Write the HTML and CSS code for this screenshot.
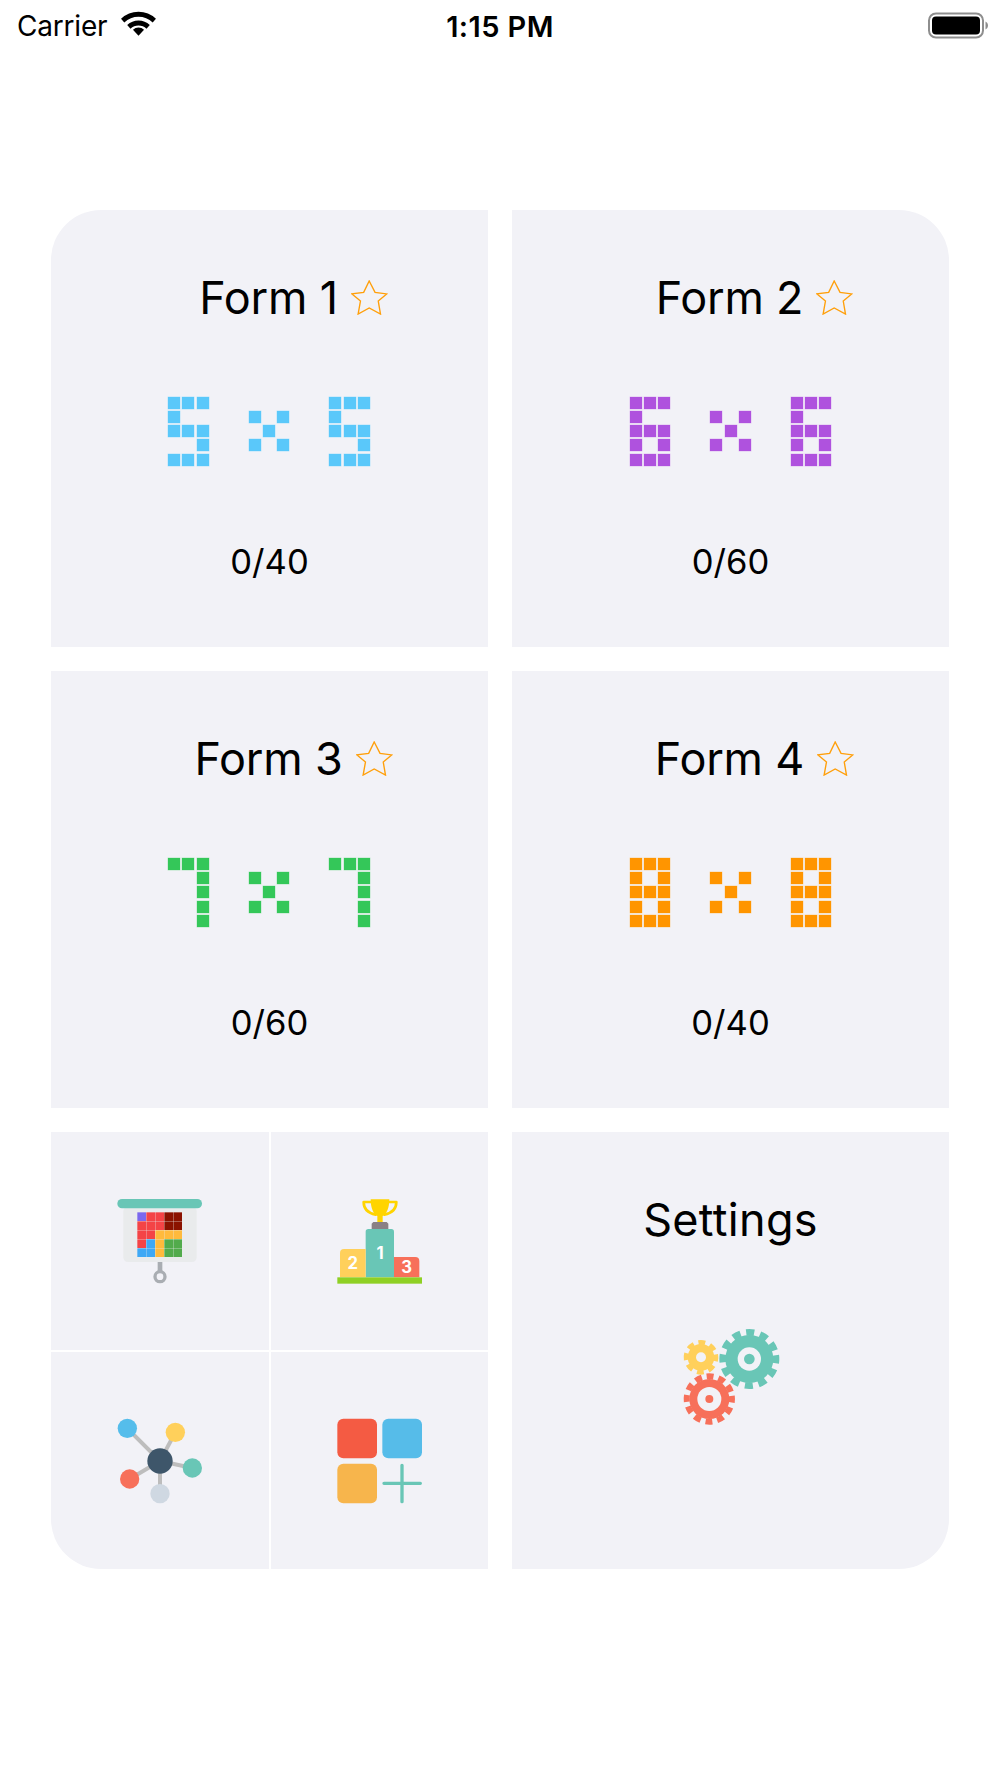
FILE: index.html
```html
<!DOCTYPE html>
<html lang="en">
<head>
<meta charset="utf-8">
<title>Forms</title>
<link rel="stylesheet" href="styles.css">
</head>
<body>
<header class="status">
  <div class="status-left">
    <span class="carrier">Carrier</span>
    <svg class="wifi" viewBox="0 2 36 24"><path d="M18 25.500 12.600 19.600a8 8 0 0 1 10.800 0Z"/><path d="M18 2.200A25 25 0 0 1 35 9l-3.200 3.500a20.200 20.200 0 0 0-27.600 0L1 9A25 25 0 0 1 18 2.200Z"/><path d="M18 10.600a16 16 0 0 1 11 4.400l-3.200 3.500a11.400 11.400 0 0 0-15.600 0L7 15a16 16 0 0 1 11-4.400Z"/></svg>
  </div>
  <div class="time">1:15 PM</div>
  <div class="status-right">
    <svg class="battery" viewBox="0 0 60 27"><rect x="1" y="1.500" width="54" height="24" rx="7" class="batt-line"/><rect x="4" y="4.500" width="48" height="18" rx="4"/><path d="M57.500 9.500v8c1.500-.6 2.500-2.300 2.500-4s-1-3.400-2.500-4Z" class="batt-nub"/></svg>
  </div>
</header>

<main class="board">
  <section class="card sky">
    <h2 class="title"><span class="title-text">Form 1<svg class="star" viewBox="0 0 38 36"><polygon points="18.700,1 24.700,12.700 36.700,14.300 28,21.700 30.300,35 18.700,28.700 7.300,35 9.700,21.700 1,14.300 13,12.700"/></svg></span></h2>
    <div class="pixels">
      <div class="digit"><i></i><i></i><i></i><i></i><b></b><b></b><i></i><i></i><i></i><b></b><b></b><i></i><i></i><i></i><i></i></div>
      <div class="digit"><b></b><b></b><b></b><i></i><b></b><i></i><b></b><i></i><b></b><i></i><b></b><i></i><b></b><b></b><b></b></div>
      <div class="digit"><i></i><i></i><i></i><i></i><b></b><b></b><i></i><i></i><i></i><b></b><b></b><i></i><i></i><i></i><i></i></div>
    </div>
    <p class="count">0/40</p>
  </section>

  <section class="card violet">
    <h2 class="title"><span class="title-text">Form 2<svg class="star" viewBox="0 0 38 36"><polygon points="18.700,1 24.700,12.700 36.700,14.300 28,21.700 30.300,35 18.700,28.700 7.300,35 9.700,21.700 1,14.300 13,12.700"/></svg></span></h2>
    <div class="pixels">
      <div class="digit"><i></i><i></i><i></i><i></i><b></b><b></b><i></i><i></i><i></i><i></i><b></b><i></i><i></i><i></i><i></i></div>
      <div class="digit"><b></b><b></b><b></b><i></i><b></b><i></i><b></b><i></i><b></b><i></i><b></b><i></i><b></b><b></b><b></b></div>
      <div class="digit"><i></i><i></i><i></i><i></i><b></b><b></b><i></i><i></i><i></i><i></i><b></b><i></i><i></i><i></i><i></i></div>
    </div>
    <p class="count">0/60</p>
  </section>

  <section class="card green">
    <h2 class="title"><span class="title-text">Form 3<svg class="star" viewBox="0 0 38 36"><polygon points="18.700,1 24.700,12.700 36.700,14.300 28,21.700 30.300,35 18.700,28.700 7.300,35 9.700,21.700 1,14.300 13,12.700"/></svg></span></h2>
    <div class="pixels">
      <div class="digit"><i></i><i></i><i></i><b></b><b></b><i></i><b></b><b></b><i></i><b></b><b></b><i></i><b></b><b></b><i></i></div>
      <div class="digit"><b></b><b></b><b></b><i></i><b></b><i></i><b></b><i></i><b></b><i></i><b></b><i></i><b></b><b></b><b></b></div>
      <div class="digit"><i></i><i></i><i></i><b></b><b></b><i></i><b></b><b></b><i></i><b></b><b></b><i></i><b></b><b></b><i></i></div>
    </div>
    <p class="count">0/60</p>
  </section>

  <section class="card orange">
    <h2 class="title"><span class="title-text">Form 4<svg class="star" viewBox="0 0 38 36"><polygon points="18.700,1 24.700,12.700 36.700,14.300 28,21.700 30.300,35 18.700,28.700 7.300,35 9.700,21.700 1,14.300 13,12.700"/></svg></span></h2>
    <div class="pixels">
      <div class="digit"><i></i><i></i><i></i><i></i><b></b><i></i><i></i><i></i><i></i><i></i><b></b><i></i><i></i><i></i><i></i></div>
      <div class="digit"><b></b><b></b><b></b><i></i><b></b><i></i><b></b><i></i><b></b><i></i><b></b><i></i><b></b><b></b><b></b></div>
      <div class="digit"><i></i><i></i><i></i><i></i><b></b><i></i><i></i><i></i><i></i><i></i><b></b><i></i><i></i><i></i><i></i></div>
    </div>
    <p class="count">0/40</p>
  </section>

  <section class="tools">
    <div class="tool">
      <svg class="icon" viewBox="0 0 360 360">
        <rect x="70" y="80" width="220" height="166" rx="14" fill="#e9ebec"/>
        <rect x="52" y="57" width="254" height="28" rx="14" fill="#69c6b6"/>
        <rect x="173" y="246" width="14" height="32" fill="#a9adb2"/>
        <circle cx="180" cy="290" r="15" fill="none" stroke="#a9adb2" stroke-width="10"/>
        <g fill="#f44446">
          <rect x="139" y="97" width="26" height="26"/><rect x="166" y="97" width="26" height="26"/>
          <rect x="112" y="124" width="26" height="26"/><rect x="139" y="124" width="26" height="26"/><rect x="166" y="124" width="26" height="26"/>
          <rect x="112" y="151" width="26" height="26"/><rect x="139" y="151" width="26" height="26"/>
          <rect x="112" y="178" width="26" height="26"/>
        </g>
        <rect x="112" y="97" width="26" height="26" fill="#7b68ee"/>
        <g fill="#8b1200">
          <rect x="193" y="97" width="26" height="26"/><rect x="220" y="97" width="26" height="26"/>
          <rect x="193" y="124" width="26" height="26"/><rect x="220" y="124" width="26" height="26"/>
        </g>
        <g fill="#ffba3c">
          <rect x="166" y="151" width="26" height="26"/><rect x="193" y="151" width="26" height="26"/><rect x="220" y="151" width="26" height="26"/>
          <rect x="166" y="178" width="26" height="26"/><rect x="166" y="205" width="26" height="26"/>
        </g>
        <g fill="#3ea8f5">
          <rect x="139" y="178" width="26" height="26"/><rect x="112" y="205" width="26" height="26"/><rect x="139" y="205" width="26" height="26"/>
        </g>
        <g fill="#52ab4c">
          <rect x="193" y="178" width="26" height="26"/><rect x="220" y="178" width="26" height="26"/>
          <rect x="193" y="205" width="26" height="26"/><rect x="220" y="205" width="26" height="26"/>
        </g>
      </svg>
    </div>
    <div class="tool">
      <svg class="icon" viewBox="0 0 360 360">
        <path d="M155 66h-24c0 22 16 34 36 38M205 66h24c0 22-16 34-36 38" fill="none" stroke="#ffd400" stroke-width="8" stroke-linejoin="round" stroke-linecap="round"/>
        <path d="M152 58h56c0 26-8 44-20 50v18h-16v-18c-12-6-20-24-20-50Z" fill="#ffd400"/>
        <path d="M160 126h40l5 5v18h-50v-18Z" fill="#8a7f85"/>
        <path d="M137 292V155a8 8 0 0 1 8-8h69a8 8 0 0 1 8 8v137Z" fill="#69c6b6"/>
        <path d="M60 292v-73a12 12 0 0 1 12-12h65v85Z" fill="#ffd05b"/>
        <path d="M222 292v-61h64a12 12 0 0 1 12 12v49Z" fill="#f7705a"/>
        <rect x="52" y="292" width="254" height="19" fill="#8fd024"/>
        <text x="180" y="236" class="rank">1</text>
        <text x="98" y="267" class="rank">2</text>
        <text x="260" y="278" class="rank">3</text>
      </svg>
    </div>
    <div class="tool">
      <svg class="icon" viewBox="0 0 360 360">
        <g stroke="#bdbdbd" stroke-width="12">
          <line x1="180" y1="183" x2="82" y2="85"/>
          <line x1="180" y1="183" x2="226" y2="97"/>
          <line x1="180" y1="183" x2="277" y2="204"/>
          <line x1="180" y1="183" x2="89" y2="237"/>
          <line x1="180" y1="183" x2="180" y2="281"/>
        </g>
        <circle cx="82" cy="85" r="29" fill="#55bdeb"/>
        <circle cx="226" cy="97" r="29" fill="#ffd05b"/>
        <circle cx="277" cy="204" r="29" fill="#69c6b6"/>
        <circle cx="89" cy="237" r="29" fill="#f7705a"/>
        <circle cx="180" cy="281" r="29" fill="#cfd8e2"/>
        <circle cx="180" cy="183" r="38" fill="#3e566a"/>
      </svg>
    </div>
    <div class="tool">
      <svg class="icon" viewBox="0 0 360 360">
        <rect x="52" y="56" width="119" height="119" rx="18" fill="#f45b43"/>
        <rect x="187" y="56" width="119" height="119" rx="18" fill="#56bce9"/>
        <rect x="52" y="191" width="119" height="119" rx="18" fill="#f7b54c"/>
        <path d="M246 196v109M192 250h109" fill="none" stroke="#69c6b6" stroke-width="10" stroke-linecap="round"/>
      </svg>
    </div>
  </section>

  <section class="card settings">
    <h2 class="title title-wide"><span class="title-text">Settings</span></h2>
    <svg class="gears" viewBox="0 0 360 360">
      <circle cx="235" cy="147" r="72" fill="#69c6b6"/>
      <circle cx="235" cy="147" r="80" fill="none" stroke="#69c6b6" stroke-width="20" pathLength="24" stroke-dasharray="1.150 .85" transform="rotate(-8 235 147)"/>
      <circle cx="235" cy="147" r="35" fill="#f2f2f7"/>
      <circle cx="235" cy="147" r="16" fill="#69c6b6"/>
      <circle cx="90" cy="142" r="40" fill="#ffd05b"/>
      <circle cx="90" cy="142" r="44" fill="none" stroke="#ffd05b" stroke-width="16" pathLength="16" stroke-dasharray="1.150 .85" transform="rotate(-11 90 142)"/>
      <circle cx="90" cy="142" r="15" fill="#f2f2f7"/>
      <circle cx="115" cy="267" r="60" fill="#f7705a"/>
      <circle cx="115" cy="267" r="68" fill="none" stroke="#f7705a" stroke-width="18" pathLength="24" stroke-dasharray="1.150 .85" transform="rotate(-8 115 267)"/>
      <circle cx="115" cy="267" r="36" fill="#f2f2f7"/>
      <circle cx="115" cy="267" r="12" fill="#f7705a"/>
    </svg>
  </section>
</main>
</body>
</html>
```
FILE: styles.css
```css
* { box-sizing: border-box; }
html, body { margin: 0; padding: 0; background: #fff; }
body {
  width: 1000px;
  height: 1778px;
  overflow: hidden;
  font-family: Inter, "Liberation Sans", sans-serif;
  color: #000;
}

.status {
  display: grid;
  grid-template-columns: 1fr auto 1fr;
  align-items: center;
  height: 52px;
  padding: 0 12px;
}
.status-left { display: flex; align-items: center; gap: 13px; }
.carrier { margin-left: 5px; font-size: 28px; letter-spacing: -0.2px; }
.wifi { width: 37px; height: 26px; margin-bottom: 4px; fill: #000; }
.time { font-size: 29px; font-weight: 600; letter-spacing: 0.4px; }
.status-right { display: flex; justify-content: flex-end; }
.battery { width: 60px; height: 27px; margin-bottom: 2px; }
.batt-line { fill: none; stroke: #8e8e8e; stroke-width: 2; }
.batt-nub { fill: #8e8e8e; }

.board {
  display: grid;
  grid-template-columns: 437px 437px;
  grid-auto-rows: 437.3px;
  gap: 24px;
  width: 898px;
  margin: 157.500px 0 0 51px;
  border-radius: 50px;
  overflow: hidden;
}

.card {
  display: flex;
  flex-direction: column;
  align-items: center;
  background: #f2f2f7;
}

.title {
  margin: 59px 2px 0 0;
  font-size: 45px;
  font-weight: 400;
  line-height: 58px;
  letter-spacing: -0.2px;
}
.title-wide { margin-right: 0; letter-spacing: 0.3px; }
.title-text { position: relative; display: inline-block; }
.star {
  position: absolute;
  left: 100%;
  top: 11px;
  margin-left: 13px;
  width: 37px;
  height: 35px;
  fill: none;
  stroke: #ff9f0a;
  stroke-width: 1.4;
}

.pixels {
  display: flex;
  gap: 40px;
  margin-top: 70px;
}
.sky .pixels, .green .pixels { margin-right: 1px; }
.digit {
  display: grid;
  grid-template-columns: repeat(3, 12px);
  grid-auto-rows: 12px;
  gap: 2.3px;
}
.digit i { display: block; background: var(--tile); box-shadow: 0 0 0 0.4px var(--halo); }
.digit b { display: block; }

.sky { --tile: #5ac8fa; --halo: #a9e2fc; }
.violet { --tile: #af52de; --halo: #dcb4f0; }
.green { --tile: #34c759; --halo: #a5e3b6; }
.orange { --tile: #ff9500; --halo: #fbcf93; }

.count {
  margin: 74px 0 0;
  font-size: 34.600px;
  line-height: 42px;
}

.tools {
  display: grid;
  grid-template-columns: 1fr 1fr;
  grid-template-rows: 1fr 1fr;
  gap: 2px;
}
.tool {
  display: flex;
  align-items: center;
  justify-content: center;
  background: #f2f2f7;
}
.icon { width: 120px; height: 120px; margin-bottom: 2px; }
.tool:nth-child(even) .icon { margin-left: 2px; }
.rank {
  fill: #fff;
  font-family: Inter, "Liberation Sans", sans-serif;
  font-size: 50px;
  font-weight: 700;
  text-anchor: middle;
}

.gears { width: 120px; height: 120px; margin-top: 61px; }
```
